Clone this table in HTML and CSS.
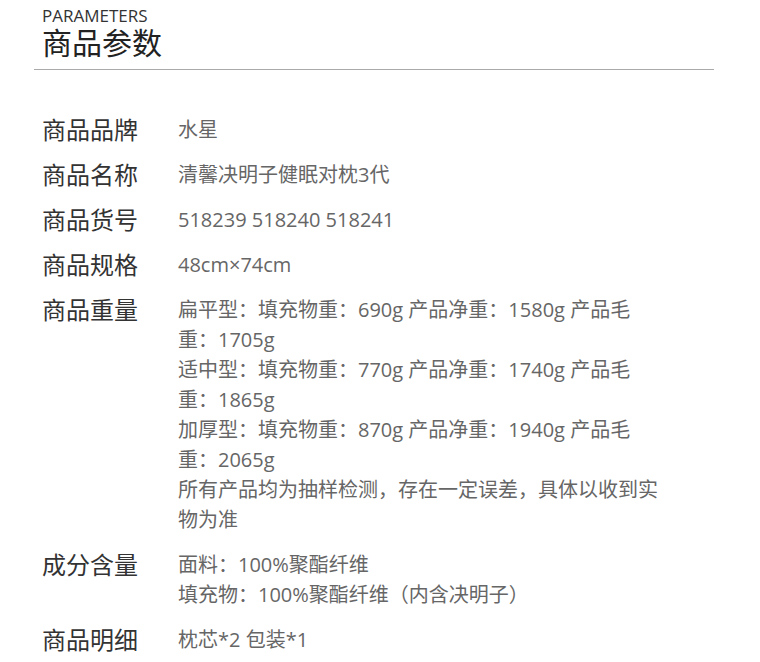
FILE: index.html
```html
<!DOCTYPE html>
<html lang="zh-CN">
<head>
    <meta charset="UTF-8">
    <title>商品参数</title>
    <link rel="stylesheet" href="styles.css">
</head>
<body>

    <div class="params">
        <div class="params-head">
            <div class="params-en">PARAMETERS</div>
            <h2 class="params-title">商品参数</h2>
        </div>

        <div class="params-list">
            <div class="param-row">
                <div class="param-label">商品品牌</div>
                <div class="param-value">水星</div>
            </div>
            <div class="param-row">
                <div class="param-label">商品名称</div>
                <div class="param-value">清馨决明子健眠对枕3代</div>
            </div>
            <div class="param-row">
                <div class="param-label">商品货号</div>
                <div class="param-value">518239 518240 518241</div>
            </div>
            <div class="param-row">
                <div class="param-label">商品规格</div>
                <div class="param-value">48cm×74cm</div>
            </div>
            <div class="param-row">
                <div class="param-label">商品重量</div>
                <div class="param-value">
                    <p>扁平型：填充物重：690g 产品净重：1580g 产品毛重：1705g</p>
                    <p>适中型：填充物重：770g 产品净重：1740g 产品毛重：1865g</p>
                    <p>加厚型：填充物重：870g 产品净重：1940g 产品毛重：2065g</p>
                    <p>所有产品均为抽样检测，存在一定误差，具体以收到实物为准</p>
                </div>
            </div>
            <div class="param-row">
                <div class="param-label">成分含量</div>
                <div class="param-value">
                    <p>面料：100%聚酯纤维</p>
                    <p>填充物：100%聚酯纤维（内含决明子）</p>
                </div>
            </div>
            <div class="param-row">
                <div class="param-label">商品明细</div>
                <div class="param-value">枕芯*2 包装*1</div>
            </div>
        </div>
    </div>

</body>
</html>
```

FILE: styles.css
```css
/* General Styles */
body {
    font-family: "Open Sans", "Noto Sans CJK SC", sans-serif;
    background-color: #fff;
    color: #333;
    margin: 0;
    padding: 0;
}

/* Parameters Block */
.params {
    width: 680px;
    margin-left: 34px;
}

.params-head {
    padding: 7px 8px 9px;
    border-bottom: 1px solid #aaa;
}

.params-en {
    font-size: 17px;
    line-height: 18px;
    color: #333;
}

.params-title {
    font-size: 30px;
    font-weight: normal;
    line-height: 34px;
    margin: 1px 0 0;
    color: #222;
}

/* Rows */
.params-list {
    padding: 45px 0 0 8px;
}

.param-row {
    display: flex;
    margin-bottom: 15px;
}

.param-label {
    width: 136px;
    flex-shrink: 0;
    font-size: 24px;
    line-height: 30px;
    color: #333;
}

.param-value {
    width: 480px;
    font-size: 20px;
    line-height: 30px;
    color: #666;
}

.param-value p {
    margin: 0;
}
```
